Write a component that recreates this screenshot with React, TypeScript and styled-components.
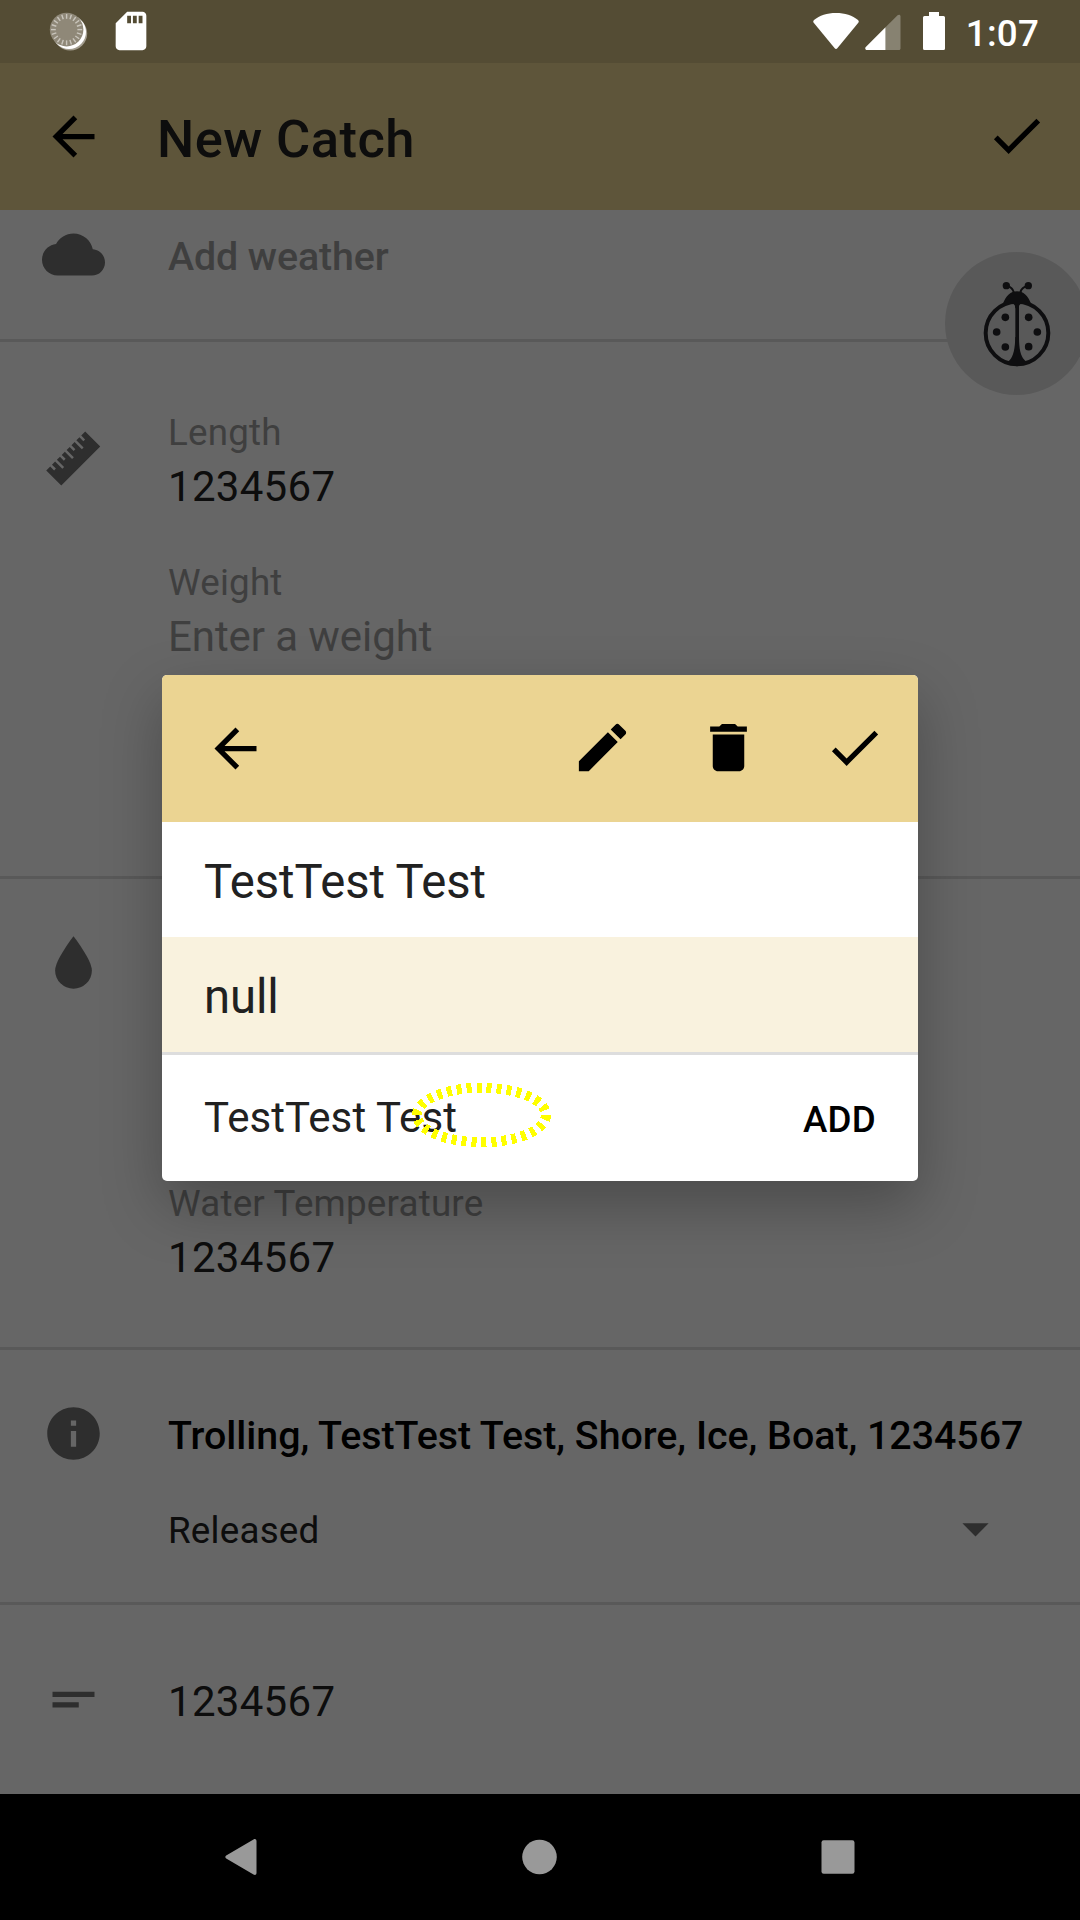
import React from 'react';
import styled, { createGlobalStyle } from 'styled-components';

const GlobalStyle = createGlobalStyle`
  * { box-sizing: border-box; }
  html, body { margin: 0; padding: 0; background: #000; }
  body { font-family: Roboto, "Noto Sans", sans-serif; }
`;

const Screen = styled.div`
  position: relative;
  display: flex;
  flex-direction: column;
  width: 1080px;
  height: 1920px;
  overflow: hidden;
  background: #fff;
`;

const Scrim = styled.div`
  position: absolute;
  inset: 0 0 126px 0;
  background: rgba(0, 0, 0, 0.6);
`;

const StatusBar = styled.header`
  position: relative;
  z-index: 1;
  display: flex;
  align-items: flex-start;
  justify-content: space-between;
  height: 63px;
  padding: 0 41px 0 49px;
  background: #544c34;
  color: #fff;
  flex: none;
`;

const StatusGroup = styled.div<{ $gap: number }>`
  display: flex;
  gap: ${(p) => p.$gap}px;
`;

const BatterySlot = styled.div`
  margin-left: 16px;
`;

const Clock = styled.span`
  margin: 12px 0 0 15px;
  font-size: 36.75px;
  line-height: 43px;
  font-weight: 500;
  letter-spacing: 0.2px;
`;

const AppBar = styled.div`
  display: flex;
  align-items: flex-start;
  height: 147px;
  padding: 42px 32px 0 42px;
  background: #ebd492;
  flex: none;
`;

const Title = styled.h1`
  flex: 1;
  margin: 3px 0 0 52px;
  font-size: 52.5px;
  line-height: 62px;
  font-weight: 500;
  letter-spacing: 0.42px;
  color: #212121;
`;

const Glyph = styled.svg<{ $size?: number; $lift?: number }>`
  display: block;
  flex: none;
  width: ${(p) => p.$size ?? 63}px;
  height: ${(p) => p.$size ?? 63}px;
  margin-top: ${(p) => -(p.$lift ?? 0)}px;
  fill: currentColor;
`;

const Form = styled.main`
  display: flex;
  flex-direction: column;
  height: 1584px;
  flex: none;
`;

const Section = styled.section<{ $height: number; $last?: boolean }>`
  display: flex;
  height: ${(p) => p.$height}px;
  padding-left: 42px;
  border-bottom: ${(p) => (p.$last ? '0' : '3px solid #dedede')};
  flex: none;
`;

const IconSlot = styled.div<{ $top: number }>`
  width: 126px;
  padding-top: ${(p) => p.$top}px;
  color: #737373;
  flex: none;
`;

const Fields = styled.div<{ $top: number }>`
  display: flex;
  flex-direction: column;
  flex: 1;
  padding-top: ${(p) => p.$top}px;
  white-space: nowrap;
`;

const Field = styled.div`
  display: flex;
  flex-direction: column;
  gap: 8px;
  & + & { margin-top: 50px; }
`;

const Label = styled.span`
  font-size: 36.75px;
  line-height: 43px;
  letter-spacing: 0.2px;
  color: #9e9e9e;
`;

const Value = styled.span<{ $hint?: boolean; $tracking?: number }>`
  font-size: 42px;
  line-height: 49px;
  letter-spacing: ${(p) => p.$tracking ?? 0.3}px;
  color: ${(p) => (p.$hint ? '#9e9e9e' : '#212121')};
`;

const Summary = styled.span<{ $hint?: boolean }>`
  font-size: 39.375px;
  line-height: 47px;
  font-weight: 500;
  letter-spacing: ${(p) => (p.$hint ? -0.1 : -0.03)}px;
  color: ${(p) => (p.$hint ? '#9e9e9e' : '#000')};
`;

const Spinner = styled.div`
  display: flex;
  justify-content: space-between;
  width: 839px;
  margin-top: 38px;
  font-size: 36.75px;
  line-height: 67px;
  letter-spacing: 0.22px;
  color: #212121;
  svg { color: #737373; }
`;

const BugButton = styled.button`
  position: absolute;
  left: 945px;
  top: 252px;
  display: flex;
  align-items: center;
  justify-content: center;
  width: 143px;
  height: 143px;
  padding: 0;
  border: 0;
  border-radius: 50%;
  background: #dfdfdf;
  color: #242428;
`;

const Dialog = styled.div`
  position: absolute;
  left: 162px;
  top: 675px;
  width: 756px;
  height: 506px;
  border-radius: 5px;
  background: #fff;
  overflow: hidden;
  box-shadow: 0 24px 60px rgba(0, 0, 0, 0.27);
`;

const DialogBar = styled.div`
  display: flex;
  align-items: flex-start;
  justify-content: space-between;
  height: 147px;
  padding: 42px 1px 0 42px;
  background: #ebd492;
`;

const Actions = styled.div`
  display: flex;
  margin-top: -1px;
`;

const Action = styled.div`
  display: flex;
  justify-content: center;
  width: 126px;
`;

const Option = styled.div<{ $selected?: boolean }>`
  height: 115px;
  padding: 32px 42px 0;
  font-size: 47.25px;
  line-height: 56px;
  letter-spacing: -0.1px;
  color: #212121;
  background: ${(p) => (p.$selected ? '#f9f2de' : '#fff')};
`;

const EntryRow = styled.div`
  display: flex;
  align-items: baseline;
  justify-content: space-between;
  height: 129px;
  padding: 38px 42px 0;
  border-top: 3px solid #dddddd;
`;

const AddButton = styled.span`
  font-size: 36.75px;
  line-height: 43px;
  font-weight: 500;
  letter-spacing: 0.2px;
  color: #000;
`;

const TouchMark = styled.svg`
  position: absolute;
  left: 411px;
  top: 1082px;
  width: 142px;
  height: 67px;
`;

const NavBar = styled.nav`
  display: grid;
  grid-template-columns: repeat(3, 298.5px);
  align-items: center;
  justify-items: center;
  height: 126px;
  padding: 0 0 1px 91.5px;
  background: #000;
  color: #999;
  flex: none;
`;

type IconName = 'back' | 'check' | 'edit' | 'trash' | 'cloud' | 'drop' | 'info' | 'notes' | 'caret' | 'sd';

const PATHS: Record<IconName, string> = {
  back: 'M20 11H7.83l5.59-5.59L12 4l-8 8 8 8 1.41-1.41L7.83 13H20v-2z',
  check: 'M9 16.17L4.83 12l-1.42 1.41L9 19 21 7l-1.41-1.41z',
  edit: 'M3 17.25V21h3.75L17.81 9.94l-3.75-3.75L3 17.25zM20.71 7.04c.39-.39.39-1.02 0-1.41l-2.34-2.34c-.39-.39-1.02-.39-1.41 0l-1.83 1.83 3.75 3.75 1.83-1.83z',
  trash: 'M6 19c0 1.1.9 2 2 2h8c1.1 0 2-.9 2-2V7H6v12zM19 4h-3.5l-1-1h-5l-1 1H5v2h14V4z',
  cloud: 'M19.35 10.04C18.67 6.59 15.64 4 12 4 9.11 4 6.6 5.64 5.35 8.04 2.34 8.36 0 10.91 0 14c0 3.31 2.69 6 6 6h13c2.76 0 5-2.24 5-5 0-2.64-2.05-4.78-4.65-4.96z',
  drop: 'M12 2C12 2 5 11 5 15a7 7 0 0 0 14 0C19 11 12 2 12 2z',
  info: 'M12 2C6.48 2 2 6.48 2 12s4.48 10 10 10 10-4.48 10-10S17.52 2 12 2zm1 15h-2v-6h2v6zm0-8h-2V7h2v2z',
  notes: 'M4 9h16v2H4V9zm0 4h10v2H4v-2z',
  caret: 'M7 10l5 5 5-5z',
  sd: 'M18 2h-8L4.02 8 4 20c0 1.1.9 2 2 2h12c1.1 0 2-.9 2-2V4c0-1.1-.9-2-2-2zm-6 6h-2V4h2v4zm3 0h-2V4h2v4zm3 0h-2V4h2v4z',
};

const Icon = ({ name, size, lift }: { name: IconName; size?: number; lift?: number }) => (
  <Glyph viewBox="0 0 24 24" $size={size} $lift={lift}>
    <path d={PATHS[name]} />
  </Glyph>
);

// Outline of a ruler lying flat, with alternating short and long notches on its top edge.
const RULER_PATH = (() => {
  const half = 10.5;
  const edge = 4.05;
  const notch = 0.95;
  const notches = Array.from({ length: 7 }, (_, i) => {
    const x = -half + ((i + 1) * 2 * half) / 8 - notch / 2;
    const depth = i % 2 === 0 ? 2.1 : 3.9;
    return `H${x}v${depth}h${notch}v${-depth}`;
  }).join('');
  return `M${-half} ${-edge}${notches}H${half}V${edge}H${-half}z`;
})();

const RulerIcon = () => (
  <Glyph viewBox="0 0 24 24">
    <path d={RULER_PATH} transform="translate(11.9 12) rotate(-45)" />
  </Glyph>
);

const TICKS = Array.from({ length: 20 }, (_, i) => i * 18);

const SyncIcon = () => (
  <svg width="40" height="63" viewBox="0 0 40 63">
    <circle cx="21.2" cy="33.6" r="17" fill="#a39d8f" />
    <circle cx="20" cy="32" r="17" fill="#fff" />
    <circle cx="17.6" cy="29.6" r="16.8" fill="#8f8878" />
    {TICKS.map((a) => (
      <line
        key={a}
        x1="17.6"
        y1="18.8"
        x2="17.6"
        y2="14"
        stroke="#c9c5bc"
        strokeWidth="1.4"
        transform={`rotate(${a} 17.6 29.6)`}
      />
    ))}
  </svg>
);

const WifiIcon = () => (
  <svg width="46" height="63" viewBox="0 0 46 63" fill="#fff">
    <path d="M23 13c9 0 16.500 2.600 22 7 .9.8 1 1.800.3 2.700L24.300 48.300c-.8.900-1.800.900-2.600 0L.7 22.700C0 21.800.1 20.800 1 20 6.500 15.600 14 13 23 13z" />
  </svg>
);

const SignalIcon = () => (
  <svg width="36" height="63" viewBox="0 0 36 63" fill="#fff">
    <path d="M20.500 27.200V50H2C.3 50-.3 48.200.8 47.100z" />
    <path d="M20.500 27.200 32.600 15.300C33.800 14.200 35.500 14.700 35.500 16.500V48.500c0 .9-.6 1.500-1.500 1.500H20.500z" fillOpacity=".3" />
  </svg>
);

const BatteryIcon = () => (
  <svg width="22" height="63" viewBox="0 0 22 63" fill="#fff">
    <path d="M6 12H16V16H20.500Q22 16 22 17.500V48.500Q22 50 20.500 50H1.500Q0 50 0 48.500V17.500Q0 16 1.500 16H6z" />
  </svg>
);

const SPOTS = [
  [314, 291], [384, 291], [288, 335], [410, 335], [314, 380], [384, 379],
];

const Ladybug = () => (
  <svg width="68" height="86" viewBox="247 182 204 258" fill="currentColor">
    <circle cx="349" cy="338" r="94" fill="none" stroke="currentColor" strokeWidth="12" />
    <path d="M306 253C316 225 330 213 349 213S382 225 392 253C378 244 366 246 360 250Q354 253 354 264H344Q344 253 338 250C332 246 320 244 306 253z" />
    <rect x="344" y="250" width="11" height="130" />
    <path d="M344 350C343 385 338 408 328 418L316 430 349 438 382 430 371 418C360 408 355 385 355 350z" />
    {SPOTS.map(([x, y]) => (
      <circle key={`${x}-${y}`} cx={x} cy={y} r="11.5" />
    ))}
    <circle cx="317" cy="196" r="11" />
    <circle cx="383" cy="196" r="11" />
    <path d="M320 198Q335 200 340 217M380 198Q363 200 359 217" fill="none" stroke="currentColor" strokeWidth="6" />
  </svg>
);

export default function App() {
  return (
    <>
      <GlobalStyle />
      <Screen>
        <StatusBar>
          <StatusGroup $gap={19}>
            <SyncIcon />
            <Icon name="sd" size={46} lift={-8} />
          </StatusGroup>
          <StatusGroup $gap={6}>
            <WifiIcon />
            <SignalIcon />
            <BatterySlot>
              <BatteryIcon />
            </BatterySlot>
            <Clock>1:07</Clock>
          </StatusGroup>
        </StatusBar>

        <AppBar>
          <Icon name="back" />
          <Title>New Catch</Title>
          <Icon name="check" lift={1} />
        </AppBar>

        <Form>
          <Section $height={132}>
            <IconSlot $top={13}><Icon name="cloud" /></IconSlot>
            <Fields $top={23}>
              <Summary $hint>Add weather</Summary>
            </Fields>
          </Section>

          <Section $height={537}>
            <IconSlot $top={84.5}><RulerIcon /></IconSlot>
            <Fields $top={69}>
              <Field>
                <Label>Length</Label>
                <Value>1234567</Value>
              </Field>
              <Field>
                <Label>Weight</Label>
                <Value $hint $tracking={-0.08}>Enter a weight</Value>
              </Field>
            </Fields>
          </Section>

          <Section $height={471}>
            <IconSlot $top={52}><Icon name="drop" /></IconSlot>
            <Fields $top={303}>
              <Field>
                <Label>Water Temperature</Label>
                <Value>1234567</Value>
              </Field>
            </Fields>
          </Section>

          <Section $height={255}>
            <IconSlot $top={52}><Icon name="info" /></IconSlot>
            <Fields $top={62}>
              <Summary>Trolling, TestTest Test, Shore, Ice, Boat, 1234567</Summary>
              <Spinner>
                Released
                <Icon name="caret" />
              </Spinner>
            </Fields>
          </Section>

          <Section $height={189} $last>
            <IconSlot $top={62.5}><Icon name="notes" /></IconSlot>
            <Fields $top={72}>
              <Value>1234567</Value>
            </Fields>
          </Section>
        </Form>

        <NavBar>
          <svg width="32" height="36" viewBox="0 0 32 36" fill="currentColor">
            <path d="M28.500.5C30 -.5 31.500.2 31.500 2V34c0 1.800-1.500 2.500-3 1.500L1.200 19.500c-1.200-.8-1.200-2.200 0-3z" />
          </svg>
          <svg width="36" height="36" viewBox="0 0 36 36" fill="currentColor">
            <circle cx="18.500" cy="18" r="17.300" />
          </svg>
          <svg width="34" height="34" viewBox="0 0 34 34" fill="currentColor">
            <rect x=".5" y=".3" width="33" height="33.400" rx="2.200" />
          </svg>
        </NavBar>

        <BugButton aria-label="Report a bug">
          <Ladybug />
        </BugButton>
        <Scrim />

        <Dialog role="dialog">
          <DialogBar>
            <Icon name="back" />
            <Actions>
              <Action><Icon name="edit" /></Action>
              <Action><Icon name="trash" /></Action>
              <Action><Icon name="check" /></Action>
            </Actions>
          </DialogBar>
          <Option>TestTest Test</Option>
          <Option $selected>null</Option>
          <EntryRow>
            <Value $tracking={0.1}>TestTest Test</Value>
            <AddButton>ADD</AddButton>
          </EntryRow>
        </Dialog>

        <TouchMark viewBox="411 1082 142 67">
          <ellipse
            cx="481.500"
            cy="1115"
            rx="64.500"
            ry="27.300"
            fill="none"
            stroke="#ff0"
            strokeWidth="10"
            strokeDasharray="5 5"
            shapeRendering="crispEdges"
          />
        </TouchMark>
      </Screen>
    </>
  );
}
